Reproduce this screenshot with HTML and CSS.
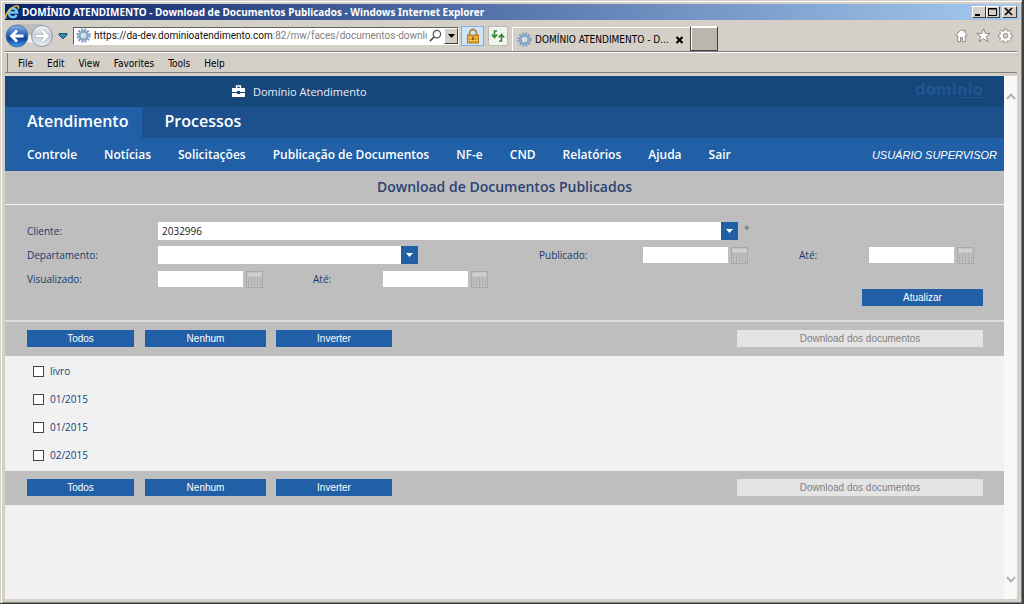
FILE: index.html
```html
<!DOCTYPE html>
<html lang="pt-BR">
<head>
<meta charset="utf-8">
<title>DOMÍNIO ATENDIMENTO - Download de Documentos Publicados</title>
<link rel="stylesheet" href="styles.css">
</head>
<body>
<svg class="defs" aria-hidden="true">
  <symbol id="gear" viewBox="0 0 16 16">
    <circle cx="8" cy="8" r="6.4" fill="none" stroke="#7f9fbd" stroke-width="2.6" stroke-dasharray="2 1.35"/>
    <circle cx="8" cy="8" r="4.2" fill="none" stroke="#86a6c4" stroke-width="3"/>
    <circle cx="8" cy="8" r="3" fill="#d3dfe9"/>
  </symbol>
  <symbol id="calendar" viewBox="0 0 17 17">
    <rect x=".5" y=".5" width="16" height="16" fill="#c4c4c4" stroke="#a9a9a9"/>
    <rect x="2" y="2" width="13" height="3" fill="#d0d0d0"/>
    <path d="M2.500 6v10M5.500 6v10M8.500 6v10M11.500 6v10M14.500 6v10" stroke="#acacac" fill="none"/>
    <path d="M1 7.500h15M1 10.500h15M1 13.500h15" stroke="#b6b6b6" fill="none"/>
  </symbol>
  <symbol id="down" viewBox="0 0 17 18"><path d="M5 7h7l-3.500 4z" fill="#fff"/></symbol>
</svg>

<div class="window">
  <div class="titlebar">
    <svg class="ie" viewBox="0 0 16 16" aria-hidden="true">
      <path d="M12.500 10.500A4.600 4.600 0 1 1 13 8H5" fill="none" stroke="#6cc5f2" stroke-width="2.600"/>
      <path d="M1.500 14.500C-1 12 4 4 10 1.500c4-1.500 5 0 4 2.500" fill="none" stroke="#f3c73c" stroke-width="1.500"/>
    </svg>
    <span class="titletext">DOMÍNIO ATENDIMENTO - Download de Documentos Publicados - Windows Internet Explorer</span>
    <button class="winbtn" aria-label="Minimizar"><svg viewBox="0 0 12 10"><path d="M2 7h5v2H2z"/></svg></button>
    <button class="winbtn" aria-label="Maximizar"><svg viewBox="0 0 12 10"><path d="M1.500 1.500h8v7h-8zM1 2h9" fill="none" stroke="#000"/></svg></button>
    <button class="winbtn close" aria-label="Fechar"><svg viewBox="0 0 12 10"><path d="M2 1l7 7M9 1L2 8" stroke="#000" stroke-width="1.600"/></svg></button>
  </div>

  <div class="toolbar">
    <svg class="navbtns" viewBox="0 0 49 26" role="img" aria-label="Voltar e avançar">
      <defs>
        <linearGradient id="back" x1="0" y1="0" x2="0" y2="1"><stop offset="0" stop-color="#8fb6e4"/><stop offset=".45" stop-color="#2a62b8"/><stop offset=".6" stop-color="#123f96"/><stop offset="1" stop-color="#3f9df0"/></linearGradient>
        <linearGradient id="fwd" x1="0" y1="0" x2="0" y2="1"><stop offset="0" stop-color="#f1f4f7"/><stop offset=".5" stop-color="#c5ccd5"/><stop offset="1" stop-color="#eef2f6"/></linearGradient>
      </defs>
      <path d="M12 1h25v12H12z" fill="#bdbdbb"/><path d="M12 12h25v9q-12-3-25 0z" fill="#f4f4f2"/>
      <circle cx="12" cy="13" r="11" fill="url(#back)" stroke="#5478ab"/>
      <circle cx="37" cy="13" r="10.500" fill="url(#fwd)" stroke="#8d99a8"/>
      <path d="M18.500 13H7M12 7.500L6.500 13l5.500 5.500" fill="none" stroke="#fff" stroke-width="2.800"/>
      <path d="M31 13h11M37.500 8l5 5-5 5" fill="none" stroke="#a9b2bd" stroke-width="4.200"/>
      <path d="M31 13h11M37.500 8l5 5-5 5" fill="none" stroke="#fff" stroke-width="2.600"/>
    </svg>
    <svg class="history" viewBox="0 0 10 8" aria-hidden="true"><path d="M1 1.500h8v1.500L5 7 1 3z" fill="#2f8bb8" stroke="#27506e"/></svg>
    <div class="address">
      <svg class="ico16"><use href="#gear"/></svg>
      <span class="url">https://da-dev.dominioatendimento.com<span class="path">:82/mw/faces/documentos-download</span></span>
      <svg class="search" viewBox="0 0 14 14" aria-hidden="true"><circle cx="8.500" cy="5.500" r="4" fill="none" stroke="#555" stroke-width="1.300"/><path d="M5.500 8.500L1 13" stroke="#555" stroke-width="1.800"/></svg>
      <button class="drop" aria-label="Mostrar endereços"><svg viewBox="0 0 7 4"><path d="M0 0h7L3.500 4z"/></svg></button>
    </div>
    <button class="lock" aria-label="Relatório de segurança"><svg viewBox="0 0 16 16"><path d="M4.500 8V5a3.500 3.500 0 0 1 7 0v3" fill="none" stroke="#a98a3c" stroke-width="1.800"/><rect x="2.500" y="7" width="11" height="8" fill="#dfa02d" stroke="#b9791a"/><path d="M3 9.500h10M3 12.500h10" stroke="#f0c35b"/><path d="M8 9v3" stroke="#704c12" stroke-width="1.400"/></svg></button>
    <button class="reload" aria-label="Atualizar página"><svg viewBox="0 0 16 16"><path d="M7 3H4.500v6M1.800 6.500l2.700 3 2.700-3M9 13h2.500V7M8.800 9.500l2.700-3 2.700 3" fill="none" stroke="#318a36" stroke-width="1.600"/></svg></button>
    <div class="tab">
      <svg class="ico16"><use href="#gear"/></svg>
      <span class="tabtext">DOMÍNIO ATENDIMENTO - D...</span>
      <button class="tabclose" aria-label="Fechar guia"><svg viewBox="0 0 8 8"><path d="M1 1l6 6M7 1L1 7" stroke="#000" stroke-width="2"/></svg></button>
    </div>
    <button class="newtab" aria-label="Nova guia"></button>
    <div class="tools">
      <svg viewBox="0 0 16 16"><path d="M8 1.500L1.500 8l1 1L4 8v6.500h3V10h2v4.500h3V8l1.500 1 1-1L12 5.500V2.500h-2v1z" fill="#fff" stroke="#88847c"/></svg>
      <svg viewBox="0 0 16 16"><path d="M8 .8l2 5h5.200l-4.200 3.300 1.700 5.400L8 11.300l-4.700 3.200L5 9.100.8 5.800H6z" fill="#fff" stroke="#88847c"/></svg>
      <svg viewBox="0 0 16 16"><path d="M6.800 1h2.400l.4 2 1.400.6 1.700-1.200 1.600 1.700-1.100 1.700.5 1.200 2 .5v2l-2 .5-.5 1.300 1.100 1.700-1.600 1.600-1.700-1.100-1.400.5-.4 2H6.800l-.4-2-1.400-.5-1.700 1.100-1.600-1.600 1.100-1.700L2.300 10l-2-.5v-2l2-.5.5-1.200-1.100-1.700 1.600-1.700L5 3.600 6.400 3z" fill="#fff" stroke="#88847c"/><circle cx="8" cy="8.300" r="2.500" fill="#d4d0c8" stroke="#88847c"/></svg>
    </div>
  </div>

  <div class="menubar"><button>File</button><button>Edit</button><button>View</button><button>Favorites</button><button>Tools</button><button>Help</button></div>

  <div class="viewport">
    <div class="page">
      <header>
        <div class="brandbar">
          <svg class="case" viewBox="0 0 13 12" aria-hidden="true"><path d="M4.500 3V1h4v2" fill="none" stroke="#fff" stroke-width="1.400"/><path d="M0 3h13v4H8V6H5v1H0zM0 8h5v1h3V8h5v4H0z" fill="#fff"/></svg>
          <span class="brand">Domínio Atendimento</span>
          <span class="logo">domi<u>nio</u></span>
        </div>
        <nav class="modules"><a class="active" href="#">Atendimento</a><a href="#">Processos</a></nav>
        <div class="mainmenu">
          <nav class="links"><a href="#">Controle</a><a href="#">Notícias</a><a href="#">Solicitações</a><a href="#">Publicação de Documentos</a><a href="#">NF-e</a><a href="#">CND</a><a href="#">Relatórios</a><a href="#">Ajuda</a><a href="#">Sair</a></nav>
          <span class="user">USUÁRIO SUPERVISOR</span>
        </div>
      </header>
      <h1>Download de Documentos Publicados</h1>
      <form class="filters">
        <div class="fields">
          <label for="cliente">Cliente:</label>
          <div class="field client"><span class="select"><select id="cliente"><option>2032996</option></select><svg><use href="#down"/></svg></span><span class="star">*</span></div>
          <label class="first" for="depto">Departamento:</label>
          <div class="field dept"><span class="select"><select id="depto"><option></option></select><svg><use href="#down"/></svg></span></div>
          <label for="pub">Publicado:</label>
          <div class="field"><input class="date" id="pub" type="text"><button type="button" class="cal" aria-label="Calendário"><svg><use href="#calendar"/></svg></button></div>
          <label for="pubate">Até:</label>
          <div class="field"><input class="date" id="pubate" type="text"><button type="button" class="cal" aria-label="Calendário"><svg><use href="#calendar"/></svg></button></div>
          <label class="first" for="vis">Visualizado:</label>
          <div class="field"><input class="date" id="vis" type="text"><button type="button" class="cal" aria-label="Calendário"><svg><use href="#calendar"/></svg></button></div>
          <label for="visate">Até:</label>
          <div class="field"><input class="date" id="visate" type="text"><button type="button" class="cal" aria-label="Calendário"><svg><use href="#calendar"/></svg></button></div>
        </div>
        <button type="button" class="btn update">Atualizar</button>
      </form>
      <div class="actions"><button class="btn all">Todos</button><button class="btn none">Nenhum</button><button class="btn invert">Inverter</button><button class="btn download" disabled>Download dos documentos</button></div>
      <div class="docs">
        <label><input type="checkbox">livro</label>
        <label><input type="checkbox">01/2015</label>
        <label><input type="checkbox">01/2015</label>
        <label><input type="checkbox">02/2015</label>
      </div>
      <div class="actions"><button class="btn all">Todos</button><button class="btn none">Nenhum</button><button class="btn invert">Inverter</button><button class="btn download" disabled>Download dos documentos</button></div>
    </div>
    <div class="scroll" aria-hidden="true">
      <svg viewBox="0 0 10 7"><path d="M1 6l4-4.500L9 6" fill="none" stroke="#b4b4b4" stroke-width="2"/></svg>
      <svg viewBox="0 0 10 7"><path d="M1 1l4 4.500L9 1" fill="none" stroke="#b4b4b4" stroke-width="2"/></svg>
    </div>
  </div>
</div>
</body>
</html>
```
FILE: styles.css
```css
* { box-sizing: border-box; }
body { margin: 0; background: #404040; font-family: "Open Sans", sans-serif; font-size: 11px; }
button, input, select { font: inherit; margin: 0; padding: 0; border: 0; border-radius: 0; }
svg { display: block; flex: none; }
a { color: inherit; text-decoration: none; }
.defs { position: absolute; width: 0; height: 0; }
.window {
  display: flex; flex-direction: column; min-height: 100vh;
  background: #d4d0c8; padding: 4px 5px;
  border-right: 2px solid #404040; border-bottom: 1px solid #404040;
  box-shadow: inset 1px 1px #d4d0c8, inset 2px 2px #fff, inset -1px -1px #808080;
}
.titlebar, .toolbar, .menubar { font-family: "DejaVu Sans Condensed", "DejaVu Sans", sans-serif; font-size: 10px; }
.titlebar {
  display: flex; align-items: center; height: 16px; padding-right: 2px; margin-right: -2px;
  background: linear-gradient(90deg, #0a246a, #a6caf0); color: #fff; font-weight: bold;
}
.ie { width: 15px; height: 15px; margin-right: 2px; }
.titletext { flex: 1; white-space: nowrap; font-family: "Noto Sans", sans-serif; line-height: 16px; }
.winbtn {
  width: 14px; height: 12px; background: #d4d0c8;
  border: 1px solid; border-color: #fff #404040 #404040 #fff;
}
.winbtn svg { width: 12px; height: 10px; }
.close { width: 15px; margin-left: 2px; }

.toolbar { display: flex; align-items: center; height: 32px; border-bottom: 1px solid #808080; }
.navbtns { width: 49px; height: 26px; }
.history { width: 10px; height: 8px; margin: 0 5px 0 4px; }
.address {
  display: flex; align-items: center; width: 386px; height: 18px; background: #fff; padding-left: 2px;
  border: 1px solid; border-color: #606060 #fff #fff #606060;
}
.ico16 { width: 15px; height: 15px; }
.url { flex: 1; min-width: 0; overflow: hidden; white-space: nowrap; margin: 0 2px 0 3px; color: #111; line-height: 16px; font-family: Roboto, sans-serif; }
.path { color: #808080; }
.search { width: 13px; height: 13px; margin-right: 2px; }
.drop {
  display: grid; place-items: center; width: 14px; height: 16px; background: #d4d0c8;
  border: 1px solid; border-color: #fff #404040 #404040 #fff;
}
.drop svg { width: 7px; height: 4px; }
.lock, .reload { display: grid; place-items: center; height: 20px; }
.lock { width: 23px; margin-left: 2px; background: #cfe3fa; border: 1px solid #83b0e3; }
.reload { width: 20px; margin-left: 4px; background: #f2f2ef; border: 1px solid #b8b8b4; border-radius: 2px; }
.lock svg, .reload svg { width: 16px; height: 16px; }
.tab {
  display: flex; align-items: center; align-self: flex-end; height: 24px; width: 178px; margin-left: 4px; padding: 0 6px 0 4px;
  border-left: 1px solid #fff; border-top: 1px solid #fff;
}
.tabtext { flex: 1; white-space: nowrap; margin-left: 3px; }
.tabclose { background: none; }
.tabclose svg { width: 9px; height: 8px; }
.newtab {
  align-self: flex-end; width: 28px; height: 25px; background: #b9b6ac;
  border: 1px solid; border-color: #fff #404040 #404040 #404040; box-shadow: inset 1px 1px #fff;
}
.tools { display: flex; gap: 7px; margin-left: auto; margin-right: 4px; }
.tools svg { width: 15px; height: 15px; }

.menubar { display: flex; align-items: center; gap: 14px; height: 21px; padding: 2px 0 0 13px; border-bottom: 1px solid #808080; border-top: 1px solid #fff; box-shadow: inset 2px 0 #d4d0c8, inset 3px 0 #808080; }
.menubar button { background: none; color: #000; line-height: 18px; }

.viewport { flex: 1; display: flex; margin-top: 3px; }
.page { flex: 1; min-width: 0; background: #f1f1f1; }
.scroll {
  display: flex; flex-direction: column; justify-content: space-between; align-items: center;
  width: 13px; padding: 17px 0 16px; background: #f8f8f8;
}
.scroll svg { width: 10px; height: 7px; }

header { background: #2160a6; color: #fff; }
.brandbar { display: flex; align-items: center; height: 31px; padding: 0 21px 0 227px; background: #16477a; }
.case { width: 13px; height: 12px; margin: 0 8px 2px 0; }
.brand { line-height: 16px; color: #e6eef7; font-size: 11px; }
.logo { margin-left: auto; padding-bottom: 4px; font-family: "DejaVu Sans", sans-serif; font-size: 15px; font-weight: bold; line-height: 16px; color: #205592; }
.logo u { text-underline-offset: 2px; text-decoration-thickness: 1px; }
.modules { display: flex; height: 31px; background: #1d508e; font-size: 16px; font-weight: 600; line-height: 28px; }
.modules a { padding: 0 14px 0 22px; }
.modules .active { background: #2160a6; }
.mainmenu { display: flex; align-items: center; height: 33px; padding: 0 7px 0 22px; }
.links { display: flex; gap: 27px; font-size: 12px; font-weight: 600; white-space: nowrap; }
.user { margin-left: auto; font-family: "Liberation Sans", sans-serif; font-size: 11px; font-style: italic; white-space: nowrap; }

h1 {
  margin: 0; height: 34px; line-height: 32px; text-align: center; background: #bebebe;
  border-bottom: 1px solid #f4f4f4; color: #2b4273; font-size: 14px; font-weight: 600;
}
.filters { padding: 17px 21px 14px 22px; background: #bebebe; border-bottom: 2px solid #dcdcdc; }
.fields {
  display: grid; align-items: center; row-gap: 6px; grid-auto-rows: 18px;
  grid-template-columns: 131px 155fr 70px 156fr 104px 156fr 70px 114px;
}
.fields label { color: #183c6c; font-size: 10px; font-weight: 500; line-height: 18px; }
.fields .first { grid-column: 1; }
.field { display: flex; align-items: center; gap: 3px; min-width: 0; }
.client { grid-column: 2 / 7; padding-right: 51px; gap: 6px; }
.dept { grid-column: 2 / 5; padding-right: 121px; }
.select { position: relative; flex: 1; display: flex; }
.select select { appearance: none; flex: 1; height: 18px; padding: 0 21px 0 4px; background: #fff; color: #222; font-size: 10px; }
.select svg { position: absolute; right: 0; top: 0; width: 17px; height: 18px; background: #2160a6; pointer-events: none; }
.star { width: 4px; padding-bottom: 4px; color: #666; font-size: 10px; }
.date { width: 85px; height: 16px; background: #fff; }
.cal { background: none; }
.cal svg { width: 17px; height: 17px; }

.btn { height: 17px; background: #2160a6; color: #fff; font-family: "Liberation Sans", sans-serif; font-size: 10px; line-height: 17px; white-space: nowrap; }
.update { display: block; width: 121px; margin: 1px 0 0 auto; }
.actions { display: flex; align-items: center; height: 34px; padding: 0 21px 2px 22px; background: #bebebe; }
.all { width: 107px; margin-right: 11px; }
.none { width: 121px; margin-right: 10px; }
.invert { width: 116px; }
.download { width: 246px; margin-left: auto; background: #e4e4e4; color: #808080; }
.docs { display: flex; flex-direction: column; padding: 1px 28px 2px; }
.docs label { display: flex; align-items: center; gap: 6px; height: 28px; color: #12407a; font-size: 10px; font-weight: 500; }
.docs input { appearance: none; width: 11px; height: 11px; background: #fff; border: 1px solid #444; }
.docs input:checked { background: #2160a6; }
```
